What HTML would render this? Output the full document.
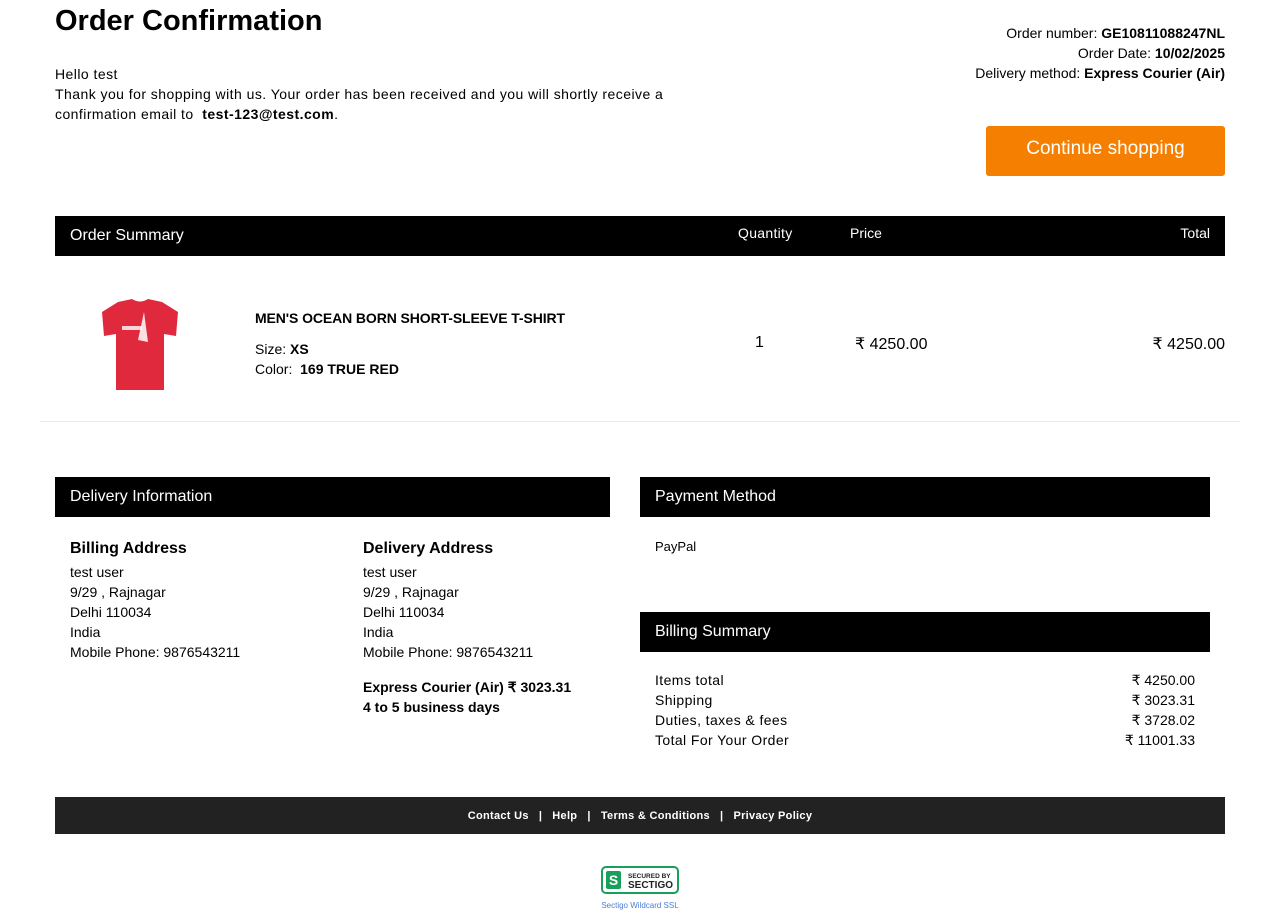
<!DOCTYPE html>
<html><head><meta charset="utf-8"><style>
*{margin:0;padding:0;box-sizing:border-box}
body{width:1280px;height:919px;background:#fff;font-family:"Liberation Sans",sans-serif;color:#000;position:relative;overflow:hidden}
.a{position:absolute}
.bar{position:absolute;background:#000;color:#fff;font-size:16px;height:40px;line-height:40px;padding-left:15px}
.t14{font-size:14px;line-height:20px}
</style></head><body>
<div class="a" style="left:55px;top:5px;font-size:29px;font-weight:bold">Order Confirmation</div>
<div class="a t14" style="left:55px;top:64px;letter-spacing:0.45px">Hello test<br>Thank you for shopping with us. Your order has been received and you will shortly receive a<br>confirmation email to &nbsp;<b>test-123@test.com</b>.</div>
<div class="a t14" style="right:55px;top:23px;text-align:right">Order number: <b>GE10811088247NL</b><br>Order Date: <b>10/02/2025</b><br>Delivery method: <b>Express Courier (Air)</b></div>
<div class="a" style="left:986px;top:126px;width:239px;height:50px;background:#f57f00;border-radius:3px;color:#fff;font-size:19px;line-height:46px;text-align:center">Continue shopping</div>

<div class="bar" style="left:55px;top:216px;width:1170px">Order Summary
<span class="a" style="left:683px;top:-3px;font-size:14px;letter-spacing:0.3px">Quantity</span>
<span class="a" style="left:795px;top:-3px;font-size:14px">Price</span>
<span class="a" style="right:15px;top:-3px;font-size:14px">Total</span></div>

<svg class="a" style="left:100px;top:298px" width="80" height="95" viewBox="0 0 80 95">
<path d="M18 4 L32 1 Q40 6 48 1 L62 4 L78 14 L76 38 L64 36 L64 92 L16 92 L16 36 L4 38 L2 14 Z" fill="#e0293d"/>
<path d="M44 14 L48 44 L38 42 Z" fill="#fff" opacity=".85"/>
<rect x="22" y="28" width="20" height="4" fill="#fff" opacity=".8"/>
</svg>
<div class="a" style="left:255px;top:310px;font-size:14px;font-weight:bold;letter-spacing:-0.1px">MEN'S OCEAN BORN SHORT-SLEEVE T-SHIRT</div>
<div class="a t14" style="left:255px;top:339px">Size: <b>XS</b><br>Color: &nbsp;<b>169 TRUE RED</b></div>
<div class="a" style="left:755px;top:334px;font-size:16px">1</div>
<div class="a" style="left:855px;top:334px;font-size:16px">₹ 4250.00</div>
<div class="a" style="right:55px;top:334px;font-size:16px">₹ 4250.00</div>
<div class="a" style="left:40px;top:421px;width:1200px;height:1px;background:#e8e8e8"></div>

<div class="bar" style="left:55px;top:477px;width:555px">Delivery Information</div>
<div class="bar" style="left:640px;top:477px;width:570px">Payment Method</div>
<div class="a" style="left:70px;top:540px;font-size:16px;font-weight:bold">Billing Address</div>
<div class="a t14" style="left:70px;top:562px">test user<br>9/29 , Rajnagar<br>Delhi 110034<br>India<br>Mobile Phone: 9876543211</div>
<div class="a" style="left:363px;top:540px;font-size:16px;font-weight:bold">Delivery Address</div>
<div class="a t14" style="left:363px;top:562px">test user<br>9/29 , Rajnagar<br>Delhi 110034<br>India<br>Mobile Phone: 9876543211</div>
<div class="a t14" style="left:363px;top:677px;font-weight:bold">Express Courier (Air) ₹ 3023.31<br>4 to 5 business days</div>
<div class="a" style="left:655px;top:539px;font-size:13px">PayPal</div>
<div class="bar" style="left:640px;top:612px;width:570px">Billing Summary</div>
<div class="a t14" style="left:655px;top:670px;letter-spacing:0.4px">Items total<br>Shipping<br>Duties, taxes &amp; fees<br>Total For Your Order</div>
<div class="a t14" style="right:85px;top:670px;text-align:right">₹ 4250.00<br>₹ 3023.31<br>₹ 3728.02<br>₹ 11001.33</div>

<div class="a" style="left:55px;top:797px;width:1170px;height:37px;background:#222;color:#fff;font-size:11px;font-weight:bold;text-align:center;line-height:38px;letter-spacing:0.3px">Contact Us &nbsp; | &nbsp; Help &nbsp; | &nbsp; Terms &amp; Conditions &nbsp; | &nbsp; Privacy Policy</div>

<svg class="a" style="left:601px;top:866px" width="78" height="28" viewBox="0 0 78 28">
<rect x="1" y="1" width="76" height="26" rx="4" fill="#fff" stroke="#1a9e5c" stroke-width="2"/>
<rect x="5" y="5" width="15" height="18" rx="2" fill="#1a9e5c"/>
<text x="12.5" y="19" font-family="Liberation Sans" font-weight="bold" font-size="14" fill="#fff" text-anchor="middle">S</text>
<text x="27" y="12" font-family="Liberation Sans" font-weight="bold" font-size="6.5" fill="#222">SECURED BY</text>
<text x="27" y="22" font-family="Liberation Sans" font-weight="bold" font-size="10" fill="#222">SECTIGO</text>
</svg>
<div class="a" style="left:601px;top:901px;width:78px;text-align:center;font-size:8px;color:#4a7fd4">Sectigo Wildcard SSL</div>
</body></html>
